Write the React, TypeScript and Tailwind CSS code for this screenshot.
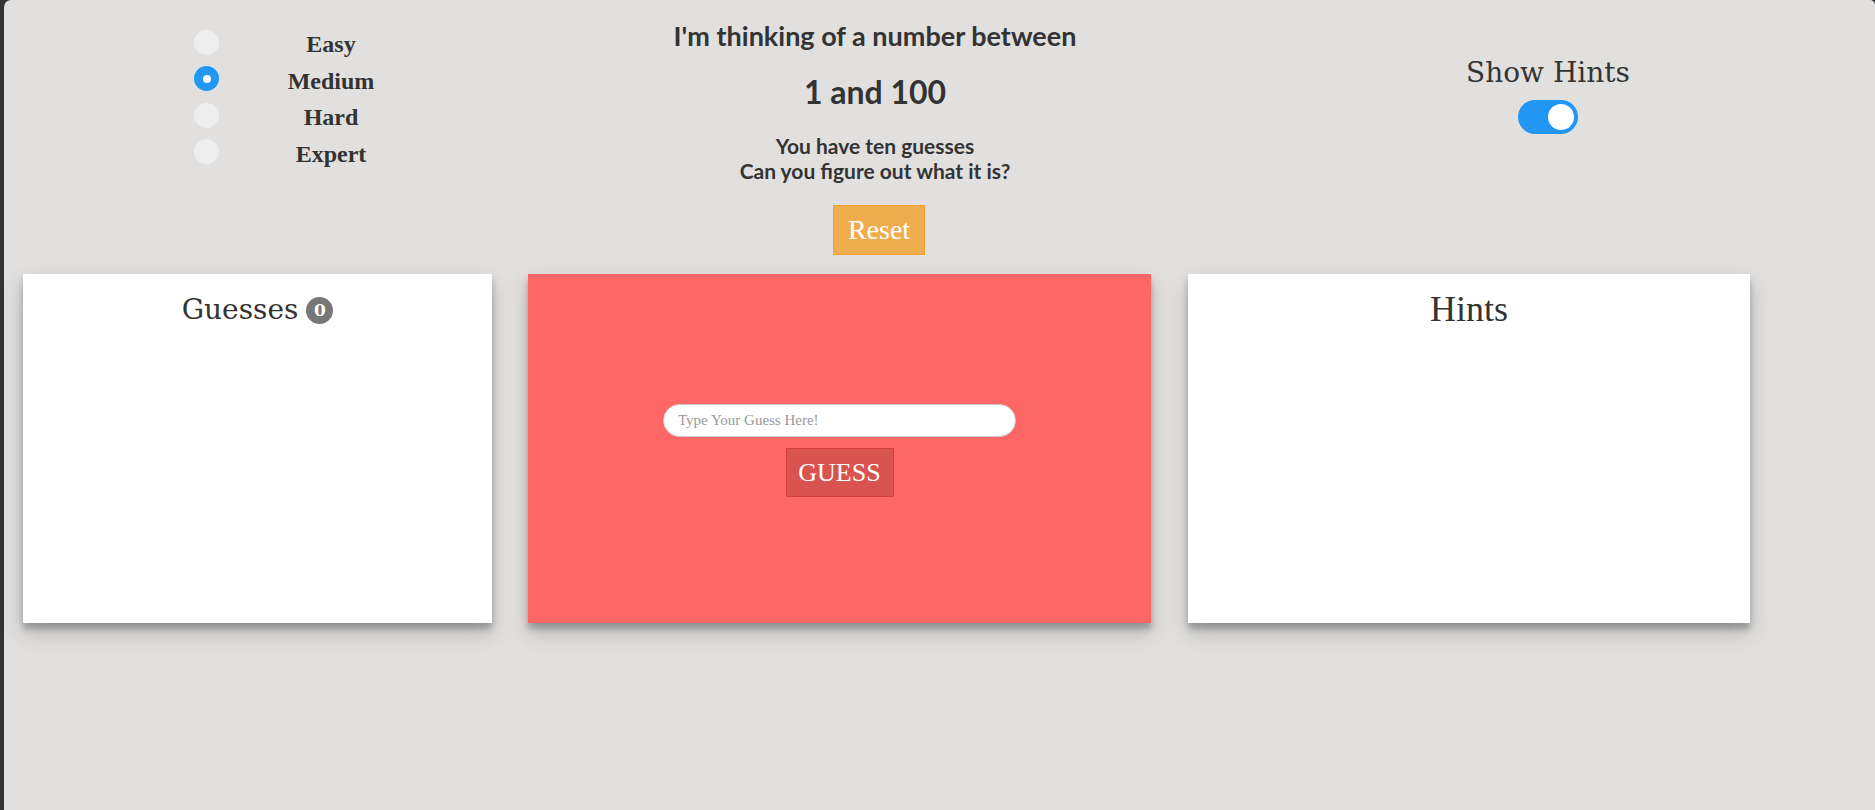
import React from "react";

const serif = { fontFamily: '"Liberation Serif", "Times New Roman", serif' };
const dejavu = { fontFamily: '"DejaVu Serif", "Liberation Serif", serif' };
const sans = { fontFamily: 'Lato, "Open Sans", sans-serif' };

function Radio({ checked }: { checked?: boolean }) {
  return checked ? (
    <div className="flex h-[25px] w-[25px] items-center justify-center rounded-full bg-[#2196f3]">
      <div className="h-[8px] w-[8px] rounded-full bg-white" />
    </div>
  ) : (
    <div className="h-[25px] w-[25px] rounded-full bg-[#eeeeee]" />
  );
}

export default function App() {
  const levels = ["Easy", "Medium", "Hard", "Expert"];
  return (
    <div className="min-h-screen bg-[#333333]">
      <div className="ml-[4px] h-[810px] overflow-hidden rounded-tl-[7px] rounded-tr-[5px] bg-[#e1e0df] text-[#333333]">
        {/* Top row */}
        <div className="flex">
          <div className="w-[621px] pl-[190px] pt-[24px]">
            <div className="grid grid-cols-[25px_134px] gap-x-[45px]">
              {levels.map((l, i) => (
                <React.Fragment key={l}>
                  <div className="flex h-[36.5px] items-center">
                    <Radio checked={i === 1} />
                  </div>
                  <div
                    className="flex h-[36.5px] items-center justify-center pt-[4px] text-[24px] font-bold leading-none"
                    style={serif}
                  >
                    {l}
                  </div>
                </React.Fragment>
              ))}
            </div>
          </div>
          <div className="flex w-[500px] flex-col items-center pt-[20px]" style={sans}>
            <div className="text-[27px] font-bold leading-[32px]">I'm thinking of a number between</div>
            <div className="mt-[20px] text-[32px] font-bold leading-[40px]">1 and 100</div>
            <div className="mt-[21px] text-center text-[21px] font-bold leading-[25px]">
              <div>You have ten guesses</div>
              <div>Can you figure out what it is?</div>
            </div>
            <button
              className="ml-[8px] mt-[22px] flex h-[50px] w-[92px] items-center justify-center border border-[#eea236] bg-[#f0ad4e] text-[28px] text-white"
              style={serif}
            >
              Reset
            </button>
          </div>
          <div className="ml-[273px] flex w-[300px] flex-col items-center pt-[56px]">
            <div className="text-[28px] leading-[34px]" style={dejavu}>
              Show Hints
            </div>
            <div className="mt-[10px] flex h-[34px] w-[60px] items-center justify-end rounded-full bg-[#2196f3] pr-[4px]">
              <div className="h-[26px] w-[26px] rounded-full bg-white" />
            </div>
          </div>
        </div>

        {/* Cards row */}
        <div className="mt-[19px] flex gap-[36px] pl-[19px]">
          <div className="h-[349px] w-[469px] bg-white pt-[19px] shadow-[0_10px_20px_rgba(0,0,0,0.19),0_6px_6px_rgba(0,0,0,0.23)]">
            <div className="flex items-center justify-center gap-[8px]">
              <span className="text-[28px] leading-[34px]" style={dejavu}>
                Guesses
              </span>
              <span
                className="flex h-[27px] w-[27px] items-center justify-center rounded-full bg-[#777777] text-[17px] font-bold leading-none text-white"
                style={dejavu}
              >
                0
              </span>
            </div>
          </div>
          <div className="flex h-[349px] w-[623px] flex-col items-center justify-center bg-[#ff6666] pt-[4px] shadow-[0_10px_20px_rgba(0,0,0,0.19),0_6px_6px_rgba(0,0,0,0.23)]">
            <input
              className="h-[33px] w-[353px] rounded-full border border-[#cccccc] bg-white pl-[14px] text-[15px] text-[#333] outline-none placeholder:text-[#999999]"
              style={serif}
              placeholder="Type Your Guess Here!"
            />
            <button
              className="mt-[11px] flex h-[49px] w-[108px] items-center justify-center border border-[#d43f3a] bg-[#d9534f] text-[26px] text-white"
              style={serif}
            >
              GUESS
            </button>
          </div>
          <div className="ml-[1px] h-[349px] w-[562px] bg-white pt-[15px] shadow-[0_10px_20px_rgba(0,0,0,0.19),0_6px_6px_rgba(0,0,0,0.23)]">
            <div className="text-center text-[36px] leading-[40px]" style={serif}>
              Hints
            </div>
          </div>
        </div>
      </div>
    </div>
  );
}
